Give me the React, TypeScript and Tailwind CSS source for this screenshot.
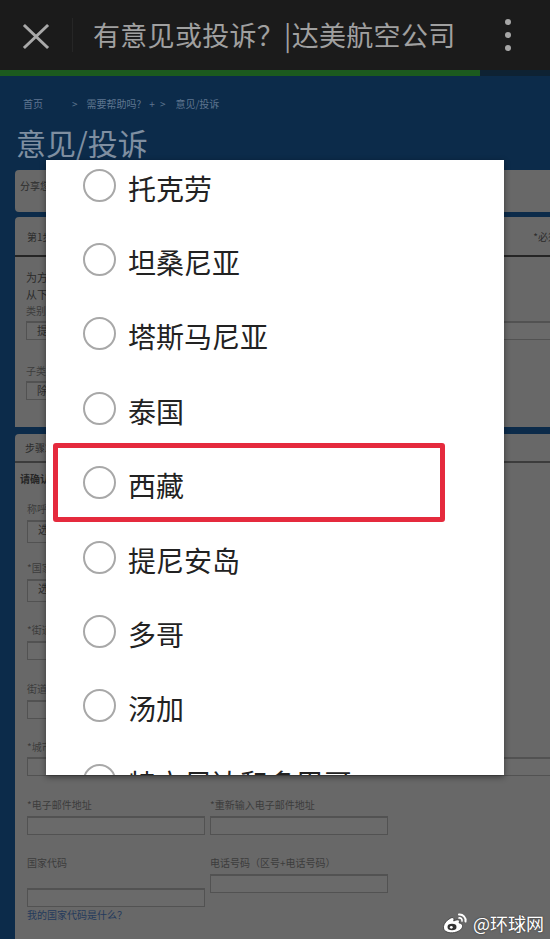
import React from "react";

const countries = [
  "托克劳",
  "坦桑尼亚",
  "塔斯马尼亚",
  "泰国",
  "西藏",
  "提尼安岛",
  "多哥",
  "汤加",
  "特立尼达和多巴哥",
];

const Label: React.FC<{ text: string; className?: string }> = ({ text, className = "" }) => (
  <div className={`text-[10px] leading-[14px] text-[#3c3c3c] ${className}`}>{text}</div>
);

const Box: React.FC<{ className?: string; children?: React.ReactNode }> = ({ className = "", children }) => (
  <div
    className={`h-[19px] border border-[#525252] border-t-[2px] bg-[#6a6a6a] text-[11px] leading-[15px] pl-[10px] text-[#2e2e2e] ${className}`}
  >
    {children}
  </div>
);

const App: React.FC = () => {
  return (
    <div
      className="relative w-[550px] h-[939px] overflow-hidden bg-[#0c2b4a]"
      style={{ fontFamily: '"Noto Sans CJK SC", "Noto Sans", sans-serif' }}
    >
      {/* browser bar */}
      <div className="h-[70px] bg-[#1b1b1b] flex items-center">
        <svg width="72" height="70" viewBox="0 0 72 70" className="shrink-0">
          <path d="M25 26 L47 47 M47 26 L25 47" stroke="#a9a9a9" strokeWidth="3" strokeLinecap="square" />
        </svg>
        <div className="w-px h-[34px] bg-[#262626]" />
        <div className="ml-[20px] text-[27px] leading-[30px] text-[#a0a0a0] tracking-[0.3px] whitespace-nowrap">
          有意见或投诉？|达美航空公司
        </div>
        <div className="ml-auto mr-[39px] flex flex-col gap-[7px]">
          <div className="w-[6px] h-[6px] rounded-full bg-[#a6a6a6]" />
          <div className="w-[6px] h-[6px] rounded-full bg-[#a6a6a6]" />
          <div className="w-[6px] h-[6px] rounded-full bg-[#a6a6a6]" />
        </div>
      </div>
      <div className="h-[6px] bg-[#0e2233]">
        <div className="w-[480px] h-full bg-[#1c5a1e]" />
      </div>

      {/* dimmed page */}
      <div className="flex flex-col">
        <div className="mt-[20px] h-[14px] flex items-center text-[10px] text-[#5f7690] pl-[23px] whitespace-nowrap">
          <span>首页</span>
          <span className="ml-[29px]">&gt;</span>
          <span className="ml-[9px]">需要帮助吗?</span>
          <span className="ml-[8px]">+</span>
          <span className="ml-[5px]">&gt;</span>
          <span className="ml-[10px]">意见/投诉</span>
        </div>
        <div className="mt-[17px] ml-[16px] h-[30px] text-[30px] leading-[30px] text-[#7f8fa1]">意见/投诉</div>

        <div className="mt-[13px] ml-[15px] mr-[-30px] h-[42px] rounded-[4px] bg-[#686868] pl-[5px] pt-[9px]">
          <div className="text-[10px] leading-[14px] text-[#2c2c2c]">分享您的意见</div>
        </div>

        <div className="mt-[5px] ml-[15px] mr-[-30px] h-[210px] rounded-t-[4px] bg-[#686868] flex flex-col">
          <div className="h-[40px] border-b-[2px] border-[#252525] flex items-center pl-[12px] pr-[2px] text-[10px] text-[#2c2c2c] whitespace-nowrap">
            <span>第1步：选择类别</span>
            <span className="ml-auto">*必须填写</span>
          </div>
          <div className="pl-[11px] pt-[12px] flex flex-col">
            <div className="text-[11px] leading-[17px] text-[#2a2a2a]">为方便我们处理您的意见</div>
            <div className="text-[11px] leading-[17px] text-[#2a2a2a]">从下列选项中选择</div>
            <Label text="类别" className="mt-[1px]" />
            <Box className="mt-[3px]">提出投诉</Box>
            <Label text="子类别" className="mt-[24px]" />
            <Box className="mt-[3px] w-[260px]">除其他</Box>
          </div>
        </div>

        <div className="mt-[7px] ml-[15px] mr-[-30px] h-[520px] rounded-t-[4px] bg-[#686868] flex flex-col">
          <div className="h-[29px] border-b-[2px] border-[#3c3c3c] flex items-center pl-[10px] text-[10px] text-[#2c2c2c]">
            步骤2：您的联系信息
          </div>
          <div className="pl-[5px] pt-[9px] text-[10px] leading-[14px] text-[#262626] font-bold">请确认以下信息</div>
          <div className="pl-[12px] flex flex-col">
            <Label text="称呼" className="mt-[16px]" />
            <Box className="mt-[4px] w-[178px] h-[23px]">选择</Box>
            <Label text="*国家" className="mt-[18px]" />
            <Box className="mt-[4px] w-[178px] h-[23px] border-[#3f5f85] border-t-[1px]">选择</Box>
            <Label text="*街道地址" className="mt-[21px]" />
            <Box className="mt-[4px] w-[178px]" />
            <Label text="街道地址2" className="mt-[22px]" />
            <Box className="mt-[4px] w-[178px]" />
            <Label text="*城市" className="mt-[21px]" />
            <Box className="mt-[3px]" />
            <div className="mt-[22px] flex gap-[5px]">
              <div className="w-[178px] flex flex-col">
                <Label text="*电子邮件地址" />
                <Box className="mt-[4px]" />
              </div>
              <div className="w-[178px] flex flex-col">
                <Label text="*重新输入电子邮件地址" />
                <Box className="mt-[4px]" />
              </div>
            </div>
            <div className="mt-[21px] flex gap-[5px]">
              <div className="w-[178px] flex flex-col">
                <Label text="国家代码" />
                <Box className="mt-[18px]" />
                <div className="mt-[1px] text-[10px] leading-[14px] text-[#243a5c]">我的国家代码是什么？</div>
              </div>
              <div className="w-[178px] flex flex-col">
                <Label text="电话号码（区号+电话号码）" />
                <Box className="mt-[4px]" />
              </div>
            </div>
          </div>
        </div>
      </div>

      {/* country picker dialog */}
      <div className="absolute left-[46px] top-[160px] w-[458px] h-[615px] bg-white overflow-hidden shadow-[0_2px_6px_rgba(0,0,0,0.45)]">
        <div className="-mt-[12px] flex flex-col">
          {countries.map((name) => (
            <div key={name} className="h-[74.4px] shrink-0 flex items-center pl-[37px]">
              <div className="w-[33px] h-[33px] rounded-full border-[2px] border-[#a8a8a8] shrink-0" />
              <div className="ml-[12px] mt-[5px] text-[28px] leading-[32px] text-[#222222] whitespace-nowrap">{name}</div>
            </div>
          ))}
        </div>
        <div className="absolute left-[7px] top-[283px] w-[392px] h-[79px] border-[5px] border-[#e52a3d] rounded-[3px]" />
      </div>

      {/* watermark */}
      <div className="absolute right-[6px] bottom-[4px] flex items-center gap-[3px] text-white text-[18px] leading-[24px] [text-shadow:0_0_2px_rgba(0,0,0,0.6)]">
        <svg width="30" height="24" viewBox="0 0 30 24">
          <path
            d="M12 6.5c-4 1.5-9 6-8.5 10.5.5 4 6 5.5 11 4.5 5-1 8.5-4 8-7-.3-2-2.5-2.5-3.5-2.5.8-1.5.6-3-.8-3.2-1.5-.2-3.5.8-4.5 1.2.6-1.6.4-3.5-1.7-3.5z"
            fill="white"
            stroke="#333"
            strokeWidth="0.8"
          />
          <ellipse cx="12" cy="16" rx="4.5" ry="3.3" fill="#333" />
          <circle cx="11.3" cy="16.3" r="1.4" fill="white" />
          <path d="M19 3.5a6 6 0 0 1 6.5 7" stroke="white" strokeWidth="2" fill="none" strokeLinecap="round" />
          <path d="M19 7a2.5 2.5 0 0 1 3 3" stroke="white" strokeWidth="1.6" fill="none" strokeLinecap="round" />
        </svg>
        <span>@环球网</span>
      </div>
    </div>
  );
};

export default App;
